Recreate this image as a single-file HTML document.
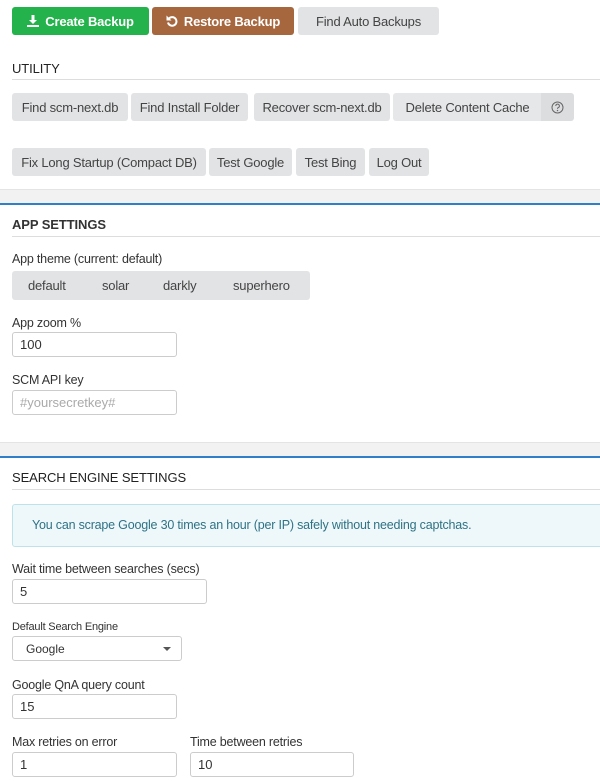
<!DOCTYPE html>
<html><head><meta charset="utf-8"><style>
*{box-sizing:border-box;margin:0;padding:0}
body{width:600px;height:781px;position:relative;background:#fff;font-family:"Liberation Sans",sans-serif;color:#333;overflow:hidden;font-size:13px}
.a{position:absolute}
.b{position:absolute;background:#e2e3e5;color:#444;border-radius:3px;display:flex;align-items:center;justify-content:center;font-size:13px;white-space:nowrap;letter-spacing:-0.2px}
.h{position:absolute;left:12px;font-size:13px;font-weight:bold;color:#333;letter-spacing:-0.1px}
.ln{position:absolute;left:12px;right:0;height:1px;background:#ddd}
.band{position:absolute;left:0;right:0;background:#f2f2f2;border-top:1px solid #e4e4e4}
.blue{position:absolute;left:0;right:0;height:2px;background:#2f80c9}
.lb{position:absolute;left:12px;font-size:12.5px;color:#333;letter-spacing:-0.2px}
.in{position:absolute;height:25px;border:1px solid #ccc;border-radius:3px;padding-left:7px;display:flex;align-items:center;font-size:13px;color:#333;background:#fff}
</style></head><body>
<div class="b" style="left:12px;top:7px;width:137px;height:28px;background:#23b24b;color:#fff;font-weight:bold;">
<svg width="12" height="12" viewBox="0 0 12 12" style="margin-right:6px"><path d="M4.5 0h3v5h2.5L6 9 2 5h2.5z" fill="#fff"/><rect x="0" y="10" width="12" height="2" fill="#fff"/></svg>Create Backup</div>
<div class="b" style="left:152px;top:7px;width:142px;height:28px;background:#a6673f;color:#fff;font-weight:bold;">
<svg width="12" height="12" viewBox="0 0 12 12" style="margin-right:6px"><path d="M3 3.5A4.3 4.3 0 1 1 2 7.5" fill="none" stroke="#fff" stroke-width="2"/><path d="M0.5 0.5v5h5z" fill="#fff"/></svg>Restore Backup</div>
<div class="b" style="left:298px;top:7px;width:141px;height:28px;">Find Auto Backups</div>

<div class="h" style="top:61px;font-weight:normal;color:#222">UTILITY</div>
<div class="ln" style="top:79px"></div>
<div class="b" style="left:12px;top:93px;width:116px;height:28px">Find scm-next.db</div>
<div class="b" style="left:131px;top:93px;width:117px;height:28px">Find Install Folder</div>
<div class="b" style="left:254px;top:93px;width:136px;height:28px">Recover scm-next.db</div>
<div class="b" style="left:393px;top:93px;width:149px;height:28px;background:#e6e7e9;border-radius:3px 0 0 3px">Delete Content Cache</div>
<div class="b" style="left:541px;top:93px;width:33px;height:28px;border-radius:0 3px 3px 0;background:#dcdddf"><svg width="13" height="13" viewBox="0 0 13 13"><circle cx="6.5" cy="6.5" r="5.5" fill="none" stroke="#666" stroke-width="1"/><path d="M4.8 5a1.8 1.8 0 1 1 2.4 1.6c-.6.3-.7.6-.7 1.3" fill="none" stroke="#666" stroke-width="1"/><circle cx="6.5" cy="9.6" r=".7" fill="#666"/></svg></div>
<div class="b" style="left:12px;top:148px;width:194px;height:28px">Fix Long Startup (Compact DB)</div>
<div class="b" style="left:209px;top:148px;width:83px;height:28px">Test Google</div>
<div class="b" style="left:296px;top:148px;width:69px;height:28px">Test Bing</div>
<div class="b" style="left:369px;top:148px;width:60px;height:28px">Log Out</div>

<div class="band" style="top:189px;height:14px"></div>
<div class="blue" style="top:203px"></div>
<div class="h" style="top:217px">APP SETTINGS</div>
<div class="ln" style="top:236px"></div>
<div class="lb" style="top:252px">App theme (current: default)</div>
<div class="b" style="left:12px;top:271px;width:298px;height:29px;justify-content:flex-start">
<span style="position:absolute;left:16px">default</span><span style="position:absolute;left:90px">solar</span><span style="position:absolute;left:151px">darkly</span><span style="position:absolute;left:221px">superhero</span></div>
<div class="lb" style="top:316px">App zoom %</div>
<div class="in" style="left:12px;top:332px;width:165px">100</div>
<div class="lb" style="top:373px">SCM API key</div>
<div class="in" style="left:12px;top:390px;width:165px;color:#aaa">#yoursecretkey#</div>

<div class="band" style="top:442px;height:14px"></div>
<div class="blue" style="top:456px"></div>
<div class="h" style="top:470px;font-weight:normal;color:#222">SEARCH ENGINE SETTINGS</div>
<div class="ln" style="top:489px"></div>
<div class="a" style="left:12px;top:504px;width:600px;height:43px;background:#eef8fa;border:1px solid #bfe2ea;border-radius:3px;color:#2f7285;font-size:12.5px;padding:13px 0 0 19px;letter-spacing:-0.2px">You can scrape Google 30 times an hour (per IP) safely without needing captchas.</div>
<div class="lb" style="top:562px">Wait time between searches (secs)</div>
<div class="in" style="left:12px;top:579px;width:195px">5</div>
<div class="lb" style="top:621px;font-size:11px">Default Search Engine</div>
<div class="in" style="left:12px;top:636px;width:170px;font-size:12px;padding-left:13px">Google<span style="position:absolute;left:150px;top:10px;border-left:4px solid transparent;border-right:4px solid transparent;border-top:4px solid #555"></span></div>
<div class="lb" style="top:678px">Google QnA query count</div>
<div class="in" style="left:12px;top:694px;width:165px">15</div>
<div class="lb" style="top:735px">Max retries on error</div>
<div class="lb" style="top:735px;left:190px">Time between retries</div>
<div class="in" style="left:12px;top:752px;width:165px">1</div>
<div class="in" style="left:190px;top:752px;width:164px">10</div>
</body></html>
